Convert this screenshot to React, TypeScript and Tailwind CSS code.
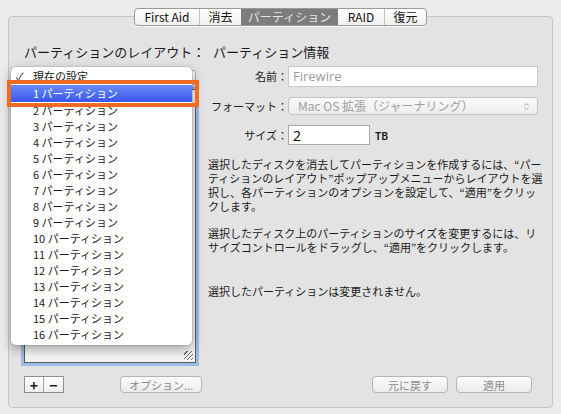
import { ChevronsUpDown } from "lucide-react";

const tabs = [
  { label: "First Aid", w: "w-[64px]" },
  { label: "消去", w: "w-[42px]" },
  { label: "パーティション", w: "w-[97px]", active: true },
  { label: "RAID", w: "w-[46px]" },
  { label: "復元", w: "w-[42px]" },
];

const counts = Array.from({ length: 15 }, (_, i) => i + 2);

const para1 = [
  "選択したディスクを消去してパーティションを作成するには、“パー",
  "ティションのレイアウト”ポップアップメニューからレイアウトを選",
  "択し、各パーティションのオプションを設定して、“適用”をクリッ",
  "クします。",
];
const para2 = [
  "選択したディスク上のパーティションのサイズを変更するには、リ",
  "サイズコントロールをドラッグし、“適用”をクリックします。",
];

function Lines({ lines }: { lines: string[] }) {
  return (
    <div>
      {lines.map((l) => (
        <div key={l} className="h-[14px] whitespace-nowrap leading-[14px]">
          {l}
        </div>
      ))}
    </div>
  );
}

export default function App() {
  return (
    <div className="relative w-[561px] h-[414px] overflow-hidden bg-[#ececec] pl-[8px] pt-[16px] font-['Noto_Sans_CJK_JP',sans-serif] text-[#1a1a1a]">
      {/* panel */}
      <div className="flex h-[392px] w-[545px] flex-col rounded-[4px] border border-[#c6c6c6] bg-[#e3e3e3]">
        <div className="flex pt-[27px]">
          {/* left column */}
          <div className="ml-[15px] flex w-[172px] flex-col">
            <div className="whitespace-nowrap text-[13px] leading-[16px]">パーティションのレイアウト：</div>
            <div className="mt-[10px] h-[15px] rounded-[3px] border border-[#b0b0b0] bg-linear-to-b from-white to-[#ededed]" />
            <div className="relative mt-[4px] h-[274px] border border-[#5a5a5a] bg-[#f4f4f4] shadow-[0_0_0_3px_#9bbbe9]">
              <div className="absolute bottom-[2px] right-[2px] h-[9px] w-[9px] bg-[repeating-linear-gradient(135deg,transparent_0,transparent_2px,#666_2px,#666_3px)]" />
            </div>
          </div>

          {/* right column */}
          <div className="ml-[12px] flex w-[332px] flex-col">
            <div className="pl-[5px] text-[13px] leading-[16px]">パーティション情報</div>
            <div className="mt-[6px] grid grid-cols-[80px_250px] items-center gap-y-[10px] text-[11px]">
              <div className="text-right">名前：</div>
              <div className="flex h-[21px] items-center border border-[#c9c9c9] bg-white pl-[4px] font-['Open_Sans',sans-serif] text-[13px] text-[#9c9c9c]">
                Firewire
              </div>
              <div className="text-right">フォーマット：</div>
              <div className="flex h-[18px] items-center justify-between rounded-[4px] border border-[#c4c4c4] bg-linear-to-b from-[#fafafa] to-[#eeeeee] pl-[9px] pr-[6px] text-[12px] text-[#a0a0a0]">
                <span>Mac OS 拡張（ジャーナリング）</span>
                <ChevronsUpDown className="h-[9px] w-[9px] text-[#9a9a9a]" strokeWidth={2.5} />
              </div>
              <div className="text-right">サイズ：</div>
              <div className="flex items-center">
                <div className="flex h-[20px] w-[82px] items-center border border-[#a8a8a8] bg-white pl-[4px] font-['Open_Sans',sans-serif] text-[14px] text-black">
                  2
                </div>
                <span className="ml-[5px] text-[10px] font-bold">TB</span>
              </div>
            </div>

            <div className="mt-[12px] text-[11px]">
              <Lines lines={para1} />
              <div className="mt-[13px]">
                <Lines lines={para2} />
              </div>
              <div className="mt-[30px]">
                <Lines lines={["選択したパーティションは変更されません。"]} />
              </div>
            </div>
          </div>
        </div>

        {/* bottom buttons */}
        <div className="mt-[13px] flex items-center pl-[15px] text-[11px]">
          <div className="flex h-[17px] border border-[#8e8e8e] bg-linear-to-b from-white to-[#eeeeee]">
            <div className="flex w-[19px] items-center justify-center border-r border-[#a0a0a0] text-[14px] font-bold leading-none">+</div>
            <div className="flex w-[19px] items-center justify-center text-[14px] font-bold leading-none">−</div>
          </div>
          <button className="ml-[56px] h-[17px] w-[82px] rounded-[4px] border border-[#b4b4b4] bg-linear-to-b from-[#fbfbfb] to-[#ececec] text-[#8c8c8c]">
            オプション...
          </button>
          <button className="ml-[170px] h-[17px] w-[76px] rounded-[4px] border border-[#b4b4b4] bg-linear-to-b from-[#fbfbfb] to-[#ececec] text-[#8c8c8c]">
            元に戻す
          </button>
          <button className="ml-[8px] h-[17px] w-[76px] rounded-[4px] border border-[#b4b4b4] bg-linear-to-b from-[#fbfbfb] to-[#ececec] text-[#8c8c8c]">
            適用
          </button>
        </div>
      </div>

      {/* segmented tabs */}
      <div className="absolute left-[134px] top-[8px] flex h-[18px] overflow-hidden rounded-[4px] border border-[#9a9a9a] bg-linear-to-b from-white to-[#f0f0f0] text-[12px] shadow-[0_1px_0_#f8f8f8]">
        {tabs.map((t, i) => (
          <div
            key={t.label}
            className={`flex ${t.w} items-center justify-center leading-none ${
              t.active ? "bg-[#7c7c7c] text-[#e6e6e6]" : "text-[#111]"
            } ${i > 0 && !t.active && !tabs[i - 1].active ? "border-l border-[#c4c4c4]" : ""}`}
          >
            {t.label}
          </div>
        ))}
      </div>

      {/* popup menu */}
      <div className="absolute left-[11px] top-[67px] h-[278px] w-[181px] rounded-[5px] bg-white pt-[1px] text-[11px] shadow-[0_4px_12px_rgba(0,0,0,0.35),0_0_0_1px_rgba(0,0,0,0.08)]">
        <div className="relative flex h-[17px] items-center pl-[22px]">
          <span className="absolute left-[5px] text-[11px]">✓</span>
          現在の設定
        </div>
        <div className="flex h-[17px] items-center bg-linear-to-b from-[#6b8bf8] to-[#3a54ec] pl-[22px] text-white">
          1 パーティション
        </div>
        {counts.map((n) => (
          <div key={n} className="flex h-[16px] items-center pl-[22px]">
            {n} パーティション
          </div>
        ))}
      </div>

      {/* highlight annotation */}
      <div className="absolute left-[7px] top-[80px] h-[27px] w-[192px] border-[4px] border-[#f06a22]" />
    </div>
  );
}
